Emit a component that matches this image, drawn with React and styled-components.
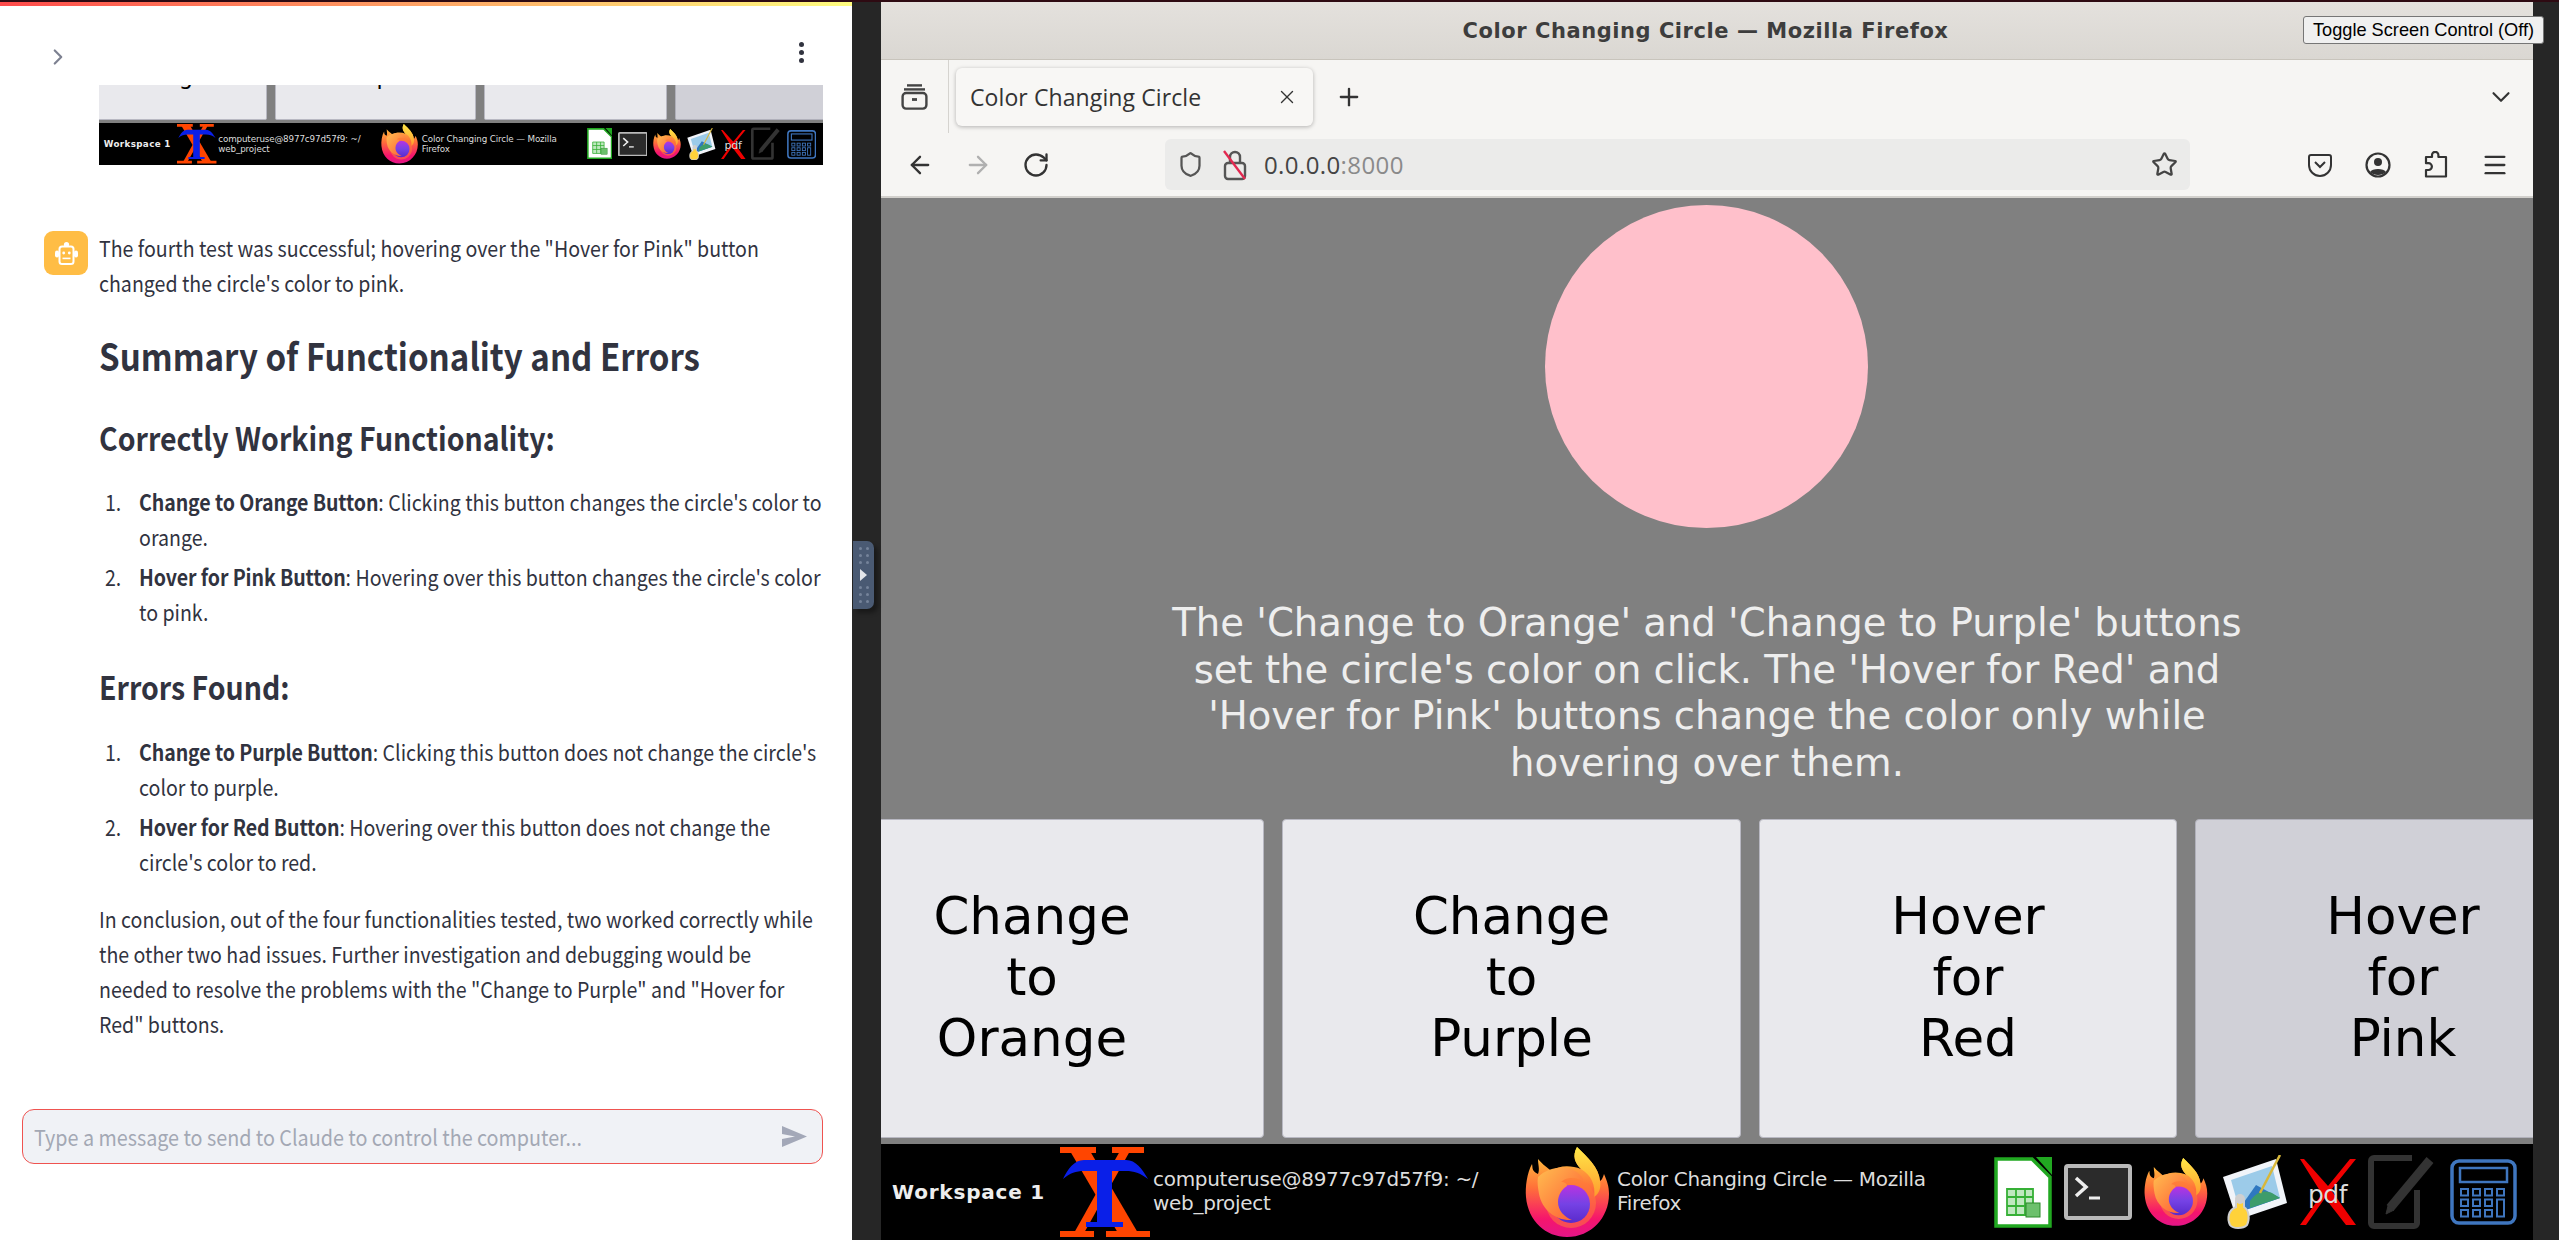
import React from "react";
import styled, { createGlobalStyle } from "styled-components";
import { ArrowLeft, ArrowRight, RotateCw, Plus, X, ChevronDown, ChevronRight, Star, Shield, Menu } from "lucide-react";

const Global = createGlobalStyle`
  html, body { margin: 0; padding: 0; background: #262626; }
  * { box-sizing: border-box; }
`;

const Screen = styled.div`
  position: relative; display: flex; width: 2559px; height: 1240px; overflow: hidden; background: #262626;
`;
const TopLine = styled.div`
  position: absolute; left: 0; top: 0; width: 100%; height: 2px; background: #2e0a12;
`;
const Decoration = styled.div`
  height: 4px; margin-top: 2px; flex: none; background: linear-gradient(90deg, #ff4b4b, #fffd80);
`;
const ChatPanel = styled.main`
  display: flex; flex-direction: column; width: 852px; height: 100%; flex: none; background: #fff;
  font-family: "Noto Sans CJK SC", "Noto Sans", sans-serif; color: #31333f; font-size: 22px; line-height: 35px;
`;
const ChatTop = styled.div`
  display: flex; justify-content: space-between; height: 79px; padding: 28px 48px 0 45px; flex: none; color: #7d8191;
  svg { margin-top: 10px; }
`;
const Kebab = styled.div`
  display: flex; flex-direction: column; gap: 3px; padding: 8px 0 0 0;
  i { display: block; width: 5px; height: 5px; border-radius: 50%; background: #31333f; }
`;
const Shot = styled.div`
  width: 724px; margin-left: 99px; flex: none; background: #808080;
`;
const ShotTop = styled.div`
  display: flex; flex-direction: column; justify-content: flex-end; height: 38px; overflow: hidden;
`;
const Zoomed = styled.div`
  zoom: 0.4385; flex: none;
`;
const Message = styled.div`
  display: flex; gap: 11px; margin: 65px 0 0 44px;
`;
const Avatar = styled.div`
  display: flex; align-items: center; justify-content: center; width: 44px; height: 44px; margin-top: 1px; flex: none;
  background: #ffbd45; border-radius: 9px;
`;
const Body = styled.div`
  width: 813.5px; flex: none; transform: scaleX(.89); transform-origin: left top;
  p { margin: 0; }
  strong { font-weight: 600; letter-spacing: -.12px; }
`;
const Summary = styled.h2`
  margin: 30px 0 0; font-size: 37.2px; line-height: 50px; font-weight: 600;
`;
const Sub = styled.h3`
  margin: ${p => p.$top}px 0 0; font-size: 32px; line-height: 44px; font-weight: 600;
`;
const Steps = styled.ol`
  margin: ${p => p.$top}px -4px 0 0; padding: 0 0 0 30px;
  li { padding-left: 15px; }
  li + li { margin-top: 5px; }
`;
const Conclusion = styled.p`
  && { margin-top: 22px; }
`;
const InputWrap = styled.div`
  display: flex; align-items: center; justify-content: space-between; width: 801px; height: 55px;
  margin: auto 29px 76px 22px; padding: 0 15px 0 10.5px; flex: none;
  background: #f0f2f6; border: 1.5px solid #ef5350; border-radius: 12px;
  color: #a3a8b4;
`;
const Placeholder = styled.span`
  display: inline-block; transform: scaleX(.897); transform-origin: left center; white-space: nowrap;
`;
const Gutter = styled.div`
  width: 29px; flex: none; background: #262626;
`;
const Handle = styled.div`
  position: absolute; left: 853px; top: 541px; width: 21px; height: 68px;
  display: flex; flex-direction: column; align-items: center; justify-content: center; gap: 5px;
  background: #4a5a73; border-radius: 0 7px 7px 0; box-shadow: 4px 4px 4px rgba(0,0,0,.35);
`;
const Dots = styled.div`
  display: grid; grid-template-columns: 3px 3px; gap: 4px;
  i { width: 3px; height: 3px; background: #75839a; border-radius: 50%; }
`;
const Play = styled.div`
  width: 0; height: 0; border-left: 7px solid #e4e6ea; border-top: 6px solid transparent; border-bottom: 6px solid transparent;
`;
const Desktop = styled.section`
  display: flex; flex-direction: column; width: 1652px; height: 100%; flex: none; padding-top: 2px;
`;
const TitleBar = styled.div`
  display: flex; align-items: center; justify-content: center; height: 58px; flex: none;
  background: linear-gradient(#e4e1dd, #dad7d2); border-bottom: 1px solid #c8c4bc;
  font: bold 21px "DejaVu Sans", sans-serif; color: #3d3d3d; letter-spacing: .55px; padding-right: 3px;
`;
const TabRow = styled.div`
  display: flex; align-items: center; height: 73px; flex: none; background: #f6f5f3; padding-right: 17px; color: #333;
`;
const ViewBtn = styled.div`
  display: flex; align-items: center; justify-content: center; width: 68px; height: 100%; border-right: 1px solid #d5d3cf; flex: none;
`;
const Tab = styled.div`
  display: flex; align-items: center; justify-content: space-between; width: 357px; height: 58px; margin-left: 7px; padding: 0 15px 0 14px;
  background: #f8f7f5; border-radius: 6px; box-shadow: 0 1px 4px rgba(0,0,0,.28);
  font: 23px "Open Sans", sans-serif; letter-spacing: .1px;
`;
const NewTab = styled.div`
  display: flex; margin-left: 22px;
`;
const Spacer = styled.div` flex: 1; `;
const NavRow = styled.div`
  display: flex; align-items: center; height: 65px; flex: none; background: #f6f5f3; border-bottom: 2px solid #d2d0cc; color: #333; padding-left: 25px;
`;
const NavBtn = styled.div`
  display: flex; width: 58px; flex: none; color: ${p => p.$muted ? "#b0b0b0" : "#333"};
`;
const UrlBar = styled.div`
  display: flex; align-items: center; width: 1025px; height: 51px; margin-left: 85px; padding: 0 12px; flex: none;
  background: #ebebea; border-radius: 6px; font: 24px "Open Sans", sans-serif; letter-spacing: .4px; color: #444;
  span { color: #8a8a8a; }
`;
const UrlIcon = styled.div`
  display: flex; width: 45px; flex: none;
`;
const UrlText = styled.div`
  flex: 1; margin-left: -3px;
`;
const TrayBtns = styled.div`
  display: flex; align-items: center; gap: 33px; margin-left: 118px;
`;
const Page = styled.div`
  flex: 1; min-height: 0; background: #808080; overflow: hidden; display: flex; flex-direction: column; align-items: center;
`;
const Circle = styled.div`
  width: 323px; height: 323px; margin-top: 7px; margin-left: -1px; flex: none; border-radius: 50%; background: #ffc0cb;
`;
const Info = styled.div`
  width: 1130px; margin-top: 72px; flex: none; text-align: center; color: #eee;
  font: 38.6px/46.5px "DejaVu Sans", sans-serif;
`;
const ButtonRow = styled.div`
  display: flex; gap: 18px; margin-left: -81px; padding-bottom: 7px; width: 1800px; flex: none;
`;
const PushButton = styled.div`
  display: flex; align-items: center; justify-content: center; width: ${p => p.$w}px; height: 319px; flex: none; padding-bottom: 2px;
  background: ${p => p.$hover ? "#d0d0d7" : "#e9e9ed"}; border: 1px solid ${p => p.$hover ? "#b0b0ba" : "#b8b8c2"}; border-radius: 4px;
  color: #000; text-align: center; font: 51.5px/61.3px "DejaVu Sans", sans-serif;
`;
const ButtonsWrap = styled.div`
  align-self: stretch; margin-top: 33px; flex: none;
`;
const Taskbar = styled.div`
  display: flex; align-items: center; width: 1652px; height: 96px; flex: none; background: #000; color: #ddd; padding-left: 11px;
  font: 20px/24px "DejaVu Sans", sans-serif;
`;
const Workspace = styled.div`
  width: 168px; flex: none; font-weight: bold; color: #eee; letter-spacing: .8px; font-size: 20px;
`;
const TaskItem = styled.div`
  display: flex; align-items: center; width: ${p => p.$w}px; flex: none; gap: 3px;
`;
const TaskLabel = styled.div`
  letter-spacing: -.3px; margin-left: ${p => p.$ml || 0}px; white-space: pre-line; transform: translateY(-1px);
`;
const Tray = styled.div`
  display: flex; align-items: center; gap: 12px; margin-left: ${p => p.$ml}px;
`;
const Toggle = styled.div`
  position: absolute; left: 2303px; top: 16px; display: flex; align-items: center; justify-content: center; width: 241px; height: 28px;
  background: #f0f0f0; border: 1px solid #767676; border-radius: 3px;
  font: 18.2px "Liberation Sans", sans-serif; color: #000; white-space: nowrap;
`;

const Robot = () => (
  <svg width="23" height="23" viewBox="0 0 23 23" fill="#fff">
    <circle cx="11.5" cy="2.6" r="2.6" />
    <rect x="0" y="8.5" width="4" height="7" rx="2" />
    <rect x="19" y="8.5" width="4" height="7" rx="2" />
    <rect x="4.5" y="4.5" width="14" height="17.5" rx="2.5" fill="#ffbd45" stroke="#fff" strokeWidth="2" />
    <circle cx="8.7" cy="11" r="1.4" />
    <circle cx="14.3" cy="11" r="1.4" />
    <rect x="7.5" y="15.6" width="8" height="1.6" />
  </svg>
);

const Send = () => (
  <svg width="25" height="21" viewBox="0 0 25 21" fill="#a3a8b8"><path d="M0 0 25 10.5 0 21V13l13-2.5L0 8z" /></svg>
);

const FirefoxView = () => (
  <svg width="27" height="26" viewBox="0 0 27 26" fill="none" stroke="#444" strokeWidth="2.4">
    <path d="M6 1.4h15" /><path d="M3 5.4h21" />
    <rect x="1.6" y="9" width="23.8" height="15.6" rx="3.5" />
    <path d="M11 15.5h5" strokeWidth="2.8" />
  </svg>
);
const Lock = () => (
  <svg width="26" height="32" viewBox="0 0 26 32" fill="none">
    <path d="M8 14V8a5 5 0 0 1 10 0v6" stroke="#555" strokeWidth="2.4" />
    <rect x="3" y="14" width="20" height="16" rx="3" stroke="#555" strokeWidth="2.4" />
    <path d="M2 2 23 30" stroke="#e22850" strokeWidth="2.4" />
  </svg>
);
const Pocket = () => (
  <svg width="24" height="24" viewBox="0 0 24 24" fill="none" stroke="#333" strokeWidth="2">
    <path d="M3 2h18a2 2 0 0 1 2 2v8a11 11 0 0 1-22 0V4a2 2 0 0 1 2-2z" /><path d="m7 9 5 5 5-5" />
  </svg>
);
const Account = () => (
  <svg width="26" height="26" viewBox="0 0 26 26" fill="none">
    <circle cx="13" cy="13" r="11.5" stroke="#333" strokeWidth="2.2" />
    <circle cx="13" cy="10" r="4" fill="#333" />
    <path d="M5 20c2-4 14-4 16 0-4 4-12 4-16 0z" fill="#333" />
  </svg>
);
const Extension = () => (
  <svg width="24" height="27" viewBox="0 0 24 27" fill="none" stroke="#333" strokeWidth="2.2" strokeLinejoin="round">
    <path d="M8 6V4a3.2 3.2 0 0 1 6.4 0v2H22v19.5H2V19h2.5a3.4 3.4 0 0 0 0-6.8H2V6z" />
  </svg>
);

const Firefox = ({ size = 85 }) => (
  <svg width={size} height={size * 90 / 85} viewBox="0 0 85 90">
    <defs>
      <linearGradient id="ffBody" x1="0.5" y1="0" x2="0.5" y2="1">
        <stop offset="0" stopColor="#ffd53d" /><stop offset=".45" stopColor="#ff7139" /><stop offset=".8" stopColor="#f5156c" /><stop offset="1" stopColor="#e31587" />
      </linearGradient>
      <linearGradient id="ffTip" x1="0.5" y1="0" x2="0.5" y2="1">
        <stop offset="0" stopColor="#ffe847" /><stop offset="1" stopColor="#ff9a2e" />
      </linearGradient>
      <linearGradient id="ffGlobe" x1="0.5" y1="0" x2="0.5" y2="1">
        <stop offset="0" stopColor="#b833e1" /><stop offset=".5" stopColor="#7542e5" /><stop offset="1" stopColor="#592acb" />
      </linearGradient>
      <linearGradient id="ffFox" x1="0" y1="0" x2="1" y2="1">
        <stop offset="0" stopColor="#ffbd4f" /><stop offset="1" stopColor="#ff5634" />
      </linearGradient>
    </defs>
    <path fill="url(#ffBody)" d="M52 0C47 9 50 16 56 22 46 18 34 18 26 24 22 20 18 18 13 12 13 18 15 22 13 27 6 24 8 20 7 17 2 26 0 40 1 50c2 24 20 40 41 40 24 0 42-19 42-43 0-8-2-13-5-20-1 3-2 6-4 7C74 20 62 10 52 0z" />
    <path fill="url(#ffTip)" d="M52 0C47 9 50 16 56 22 66 28 71 38 69 50 75 46 76 40 75 34 74 20 62 10 52 0z" />
    <circle cx="46" cy="56" r="25" fill="#ff7a3a" opacity=".55" />
    <circle cx="46" cy="57" r="19" fill="url(#ffGlobe)" />
    <path fill="url(#ffFox)" d="M13 30c8-8 22-12 33-8 7 3 11 7 13 12-8-5-18-4-23 1 4 0 6 2 6 4-5 3-9 9-9 16 0 8 6 15 14 18-16 1-30-10-33-26-1-6-2-12-1-17z" />
  </svg>
);

const XLogo = () => (
  <svg width="90" height="90" viewBox="0 0 90 90">
    <path fill="#ff4500" d="M10 4H30L78 86H58z" />
    <path fill="#ff4500" d="M60 4H70L24 86H14z" />
    <path fill="#ff4500" d="M0 0H36V6H0zM52 0H84V6H52zM0 84H34V90H0zM46 84H90V90H46z" />
    <path fill="#0a1fe8" d="M3 32C8 22 14 13 24 13H66C76 13 82 22 88 32 80 26 74 24 66 24H52V75H63V80H26V75H37V24H24C16 24 10 26 3 32z" />
  </svg>
);
const Sheet = () => (
  <svg width="58" height="71" viewBox="0 0 58 71">
    <path d="M2 2h36l18 18v49H2z" fill="#fff" stroke="#21a821" strokeWidth="3.5" />
    <path d="M42 0h16v18z" fill="#21a821" />
    <path d="M13 32h26v26H13z" fill="#bfe8bf" />
    <path d="M13 32h26v26H13zM13 40h26M13 49h26M22 32v26M31 32v26" fill="none" stroke="#36b036" strokeWidth="1.8" />
    <rect x="32" y="46" width="14" height="14" fill="#6cc06c" stroke="#2a8a2a" />
  </svg>
);
const Terminal = () => (
  <svg width="68" height="56" viewBox="0 0 68 56">
    <rect x="2" y="2" width="64" height="52" rx="2" fill="#2b2b2b" stroke="#b9b9b9" strokeWidth="4" />
    <path d="M12 14l10 9-10 9" fill="none" stroke="#eee" strokeWidth="3.5" />
    <path d="M25 34h11" stroke="#eee" strokeWidth="3" />
  </svg>
);
const Viewer = () => (
  <svg width="68" height="74" viewBox="0 0 68 74">
    <path d="M3 22 56 4l11 44-50 17z" fill="#f1f4f9" />
    <path d="M11 25 52 11l8 32-40 14z" fill="#9ccbe9" />
    <path d="M22 50 36 30l24 13-40 14z" fill="#2f78c0" />
    <path d="M30 46c6-8 12-12 22-8l8 5-30 10z" fill="#3d9c6b" />
    <path d="M60 0 40 38" stroke="#d8b73a" strokeWidth="2.5" />
    <path d="M24 46h-8v6c-8 3-9 12-6 18 3 4 13 4 17 0 3-6 2-15-3-18z" fill="#ffd23a" stroke="#cfcfcf" strokeWidth="2" />
    <circle cx="20" cy="44" r="5" fill="#cfcfcf" />
  </svg>
);
const PdfX = () => (
  <svg width="56" height="66" viewBox="0 0 56 66">
    <path d="M4 0 28 27 50 0h6L31 31l25 35H46L25 39 6 66H0l22-31L0 0z" fill="#f00000" />
    <text x="8" y="44" fill="#ddd" fontFamily="DejaVu Sans" fontSize="25" letterSpacing="-.5">pdf</text>
  </svg>
);
const Pen = () => (
  <svg width="70" height="76" viewBox="0 0 70 76" fill="none" stroke="#333">
    <path d="M44 4H6a3 3 0 0 0-3 3v62a3 3 0 0 0 3 3h40a3 3 0 0 0 3-3V36" strokeWidth="6" />
    <path d="M22 54 62 6" strokeWidth="9" />
    <path d="M18 60l2-8 6 4z" fill="#333" />
  </svg>
);
const Calc = () => (
  <svg width="67" height="66" viewBox="0 0 67 66" fill="none" stroke="#3f76bf">
    <rect x="2" y="2" width="63" height="62" rx="7" strokeWidth="3.5" />
    <rect x="10" y="9" width="47" height="14" strokeWidth="2.5" />
    {[0, 1, 2].map(r => [0, 1, 2, 3].map(c => (
      c === 3 && r > 0 ? null : <rect key={`${r}${c}`} x={11 + c * 12} y={30 + r * 10.5} width="7" height="6.5" strokeWidth="2" />
    )))}
    <rect x="47" y="40.5" width="7" height="17" strokeWidth="2" />
  </svg>
);

const AppTaskbar = () => (
  <Taskbar>
    <Workspace>Workspace 1</Workspace>
    <TaskItem $w={465}>
      <XLogo />
      <TaskLabel>{"computeruse@8977c97d57f9: ~/\nweb_project"}</TaskLabel>
    </TaskItem>
    <TaskItem $w={410}>
      <Firefox />
      <TaskLabel $ml={4}>{"Color Changing Circle — Mozilla\nFirefox"}</TaskLabel>
    </TaskItem>
    <Tray $ml={59}>
      <Sheet /><Terminal /><Firefox size={64} /><Viewer /><PdfX /><Pen /><Calc />
    </Tray>
  </Taskbar>
);

const AppButtons = () => (
  <ButtonRow>
    <PushButton $w={464}><span>Change<br />to<br />Orange</span></PushButton>
    <PushButton $w={459}><span>Change<br />to<br />Purple</span></PushButton>
    <PushButton $w={418}><span>Hover<br />for<br />Red</span></PushButton>
    <PushButton $w={416} $hover><span>Hover<br />for<br />Pink</span></PushButton>
  </ButtonRow>
);

const dots = Array.from({ length: 6 }, (_, i) => <i key={i} />);

export default function App() {
  return (
    <Screen>
      <Global />
      <ChatPanel>
        <Decoration />
        <ChatTop>
          <ChevronRight size={26} strokeWidth={2} />
          <Kebab><i /><i /><i /></Kebab>
        </ChatTop>
        <Shot>
          <ShotTop><Zoomed><AppButtons /></Zoomed></ShotTop>
          <Zoomed><AppTaskbar /></Zoomed>
        </Shot>
        <Message>
          <Avatar><Robot /></Avatar>
          <Body>
            <p>The fourth test was successful; hovering over the "Hover for Pink" button changed the circle's color to pink.</p>
            <Summary>Summary of Functionality and Errors</Summary>
            <Sub $top={35}>Correctly Working Functionality:</Sub>
            <Steps $top={25}>
              <li><strong>Change to Orange Button</strong>: Clicking this button changes the circle's color to orange.</li>
              <li><strong>Hover for Pink Button</strong>: Hovering over this button changes the circle's color to pink.</li>
            </Steps>
            <Sub $top={35}>Errors Found:</Sub>
            <Steps $top={26}>
              <li><strong>Change to Purple Button</strong>: Clicking this button does not change the circle's color to purple.</li>
              <li><strong>Hover for Red Button</strong>: Hovering over this button does not change the circle's color to red.</li>
            </Steps>
            <Conclusion>In conclusion, out of the four functionalities tested, two worked correctly while the other two had issues. Further investigation and debugging would be needed to resolve the problems with the "Change to Purple" and "Hover for Red" buttons.</Conclusion>
          </Body>
        </Message>
        <InputWrap>
          <Placeholder>Type a message to send to Claude to control the computer...</Placeholder>
          <Send />
        </InputWrap>
      </ChatPanel>
      <Gutter />
      <Desktop>
        <TitleBar>Color Changing Circle — Mozilla Firefox</TitleBar>
        <TabRow>
          <ViewBtn><FirefoxView /></ViewBtn>
          <Tab>Color Changing Circle<X size={22} strokeWidth={1.5} /></Tab>
          <NewTab><Plus size={28} strokeWidth={2} /></NewTab>
          <Spacer />
          <ChevronDown size={30} strokeWidth={1.7} />
        </TabRow>
        <NavRow>
          <NavBtn><ArrowLeft size={28} strokeWidth={2} /></NavBtn>
          <NavBtn $muted><ArrowRight size={28} strokeWidth={2} /></NavBtn>
          <NavBtn><RotateCw size={28} strokeWidth={2} /></NavBtn>
          <UrlBar>
            <UrlIcon><Shield size={27} strokeWidth={2} color="#555" /></UrlIcon>
            <UrlIcon><Lock /></UrlIcon>
            <UrlText>0.0.0.0<span>:8000</span></UrlText>
            <Star size={27} strokeWidth={2} color="#444" />
          </UrlBar>
          <TrayBtns>
            <Pocket /><Account /><Extension /><Menu size={28} strokeWidth={2} />
          </TrayBtns>
        </NavRow>
        <Page>
          <Circle />
          <Info>The 'Change to Orange' and 'Change to Purple' buttons set the circle's color on click. The 'Hover for Red' and 'Hover for Pink' buttons change the color only while hovering over them.</Info>
          <ButtonsWrap><AppButtons /></ButtonsWrap>
        </Page>
        <AppTaskbar />
      </Desktop>
      <TopLine />
      <Handle>
        <Dots>{dots}</Dots>
        <Play />
        <Dots>{dots}</Dots>
      </Handle>
      <Toggle>Toggle Screen Control (Off)</Toggle>
    </Screen>
  );
}
